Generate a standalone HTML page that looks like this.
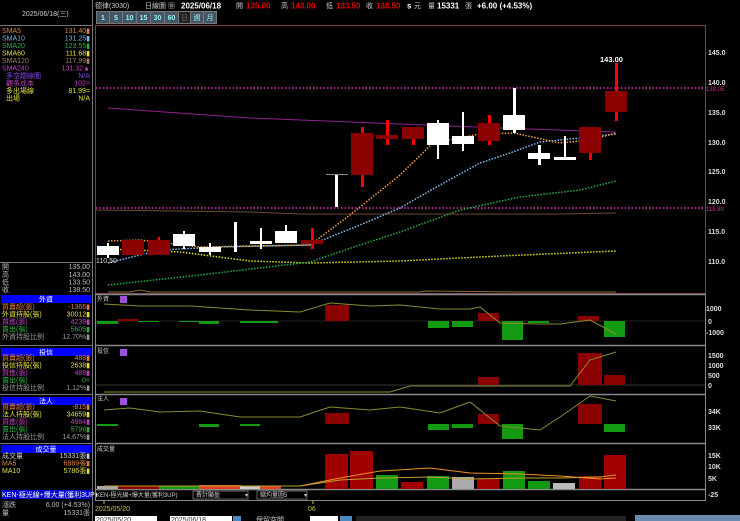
<!DOCTYPE html>
<html><head><meta charset="utf-8"><style>
html,body{margin:0;padding:0;background:#000;width:740px;height:521px;overflow:hidden}
svg{display:block}
text{font-family:"Liberation Sans","Noto Sans CJK TC",sans-serif}
.t{font-size:7px}
</style></head><body>
<svg width="740" height="521" viewBox="0 0 740 521">
<rect width="740" height="521" fill="#000"/>
<!-- left panel -->
<line x1="92.5" y1="0" x2="92.5" y2="521" stroke="#777" stroke-width="1"/>
<text x="22" y="16" class="t" fill="#ccc">2025/06/18(三)</text>
<line x1="0" y1="25.5" x2="92" y2="25.5" stroke="#777"/>
<g class="t" font-size="6.5">
<text x="2" y="33" fill="#e08040">SMA5</text><text x="90" y="33" fill="#e08040" text-anchor="end">131.40▮</text>
<text x="2" y="40.5" fill="#7ab8e0">SMA10</text><text x="90" y="40.5" fill="#7ab8e0" text-anchor="end">131.25▮</text>
<text x="2" y="48" fill="#30b040">SMA20</text><text x="90" y="48" fill="#30b040" text-anchor="end">123.55▮</text>
<text x="2" y="55.5" fill="#e0e040">SMA60</text><text x="90" y="55.5" fill="#e0e040" text-anchor="end">111.68▮</text>
<text x="2" y="63" fill="#a08060">SMA120</text><text x="90" y="63" fill="#a08060" text-anchor="end">117.99▮</text>
<text x="2" y="70.5" fill="#c040c0">SMA240</text><text x="90" y="70.5" fill="#c040c0" text-anchor="end">131.32▲</text>
<text x="6" y="78" fill="#8040e0">多空趨線圖</text><text x="90" y="78" fill="#8040e0" text-anchor="end">N/A</text>
<text x="6" y="85.5" fill="#c040c0">觀多成本</text><text x="90" y="85.5" fill="#c040c0" text-anchor="end">102=</text>
<text x="6" y="93" fill="#e0e040">多出場線</text><text x="90" y="93" fill="#e0e040" text-anchor="end">81.99=</text>
<text x="6" y="100.5" fill="#e0e040">出場</text><text x="90" y="100.5" fill="#e0e040" text-anchor="end">N/A</text>
</g>
<line x1="0" y1="262.5" x2="92" y2="262.5" stroke="#777"/>
<g class="t" font-size="6.5" fill="#bbb">
<text x="2" y="269">開</text><text x="90" y="269" text-anchor="end">135.00</text>
<text x="2" y="277">高</text><text x="90" y="277" text-anchor="end">143.00</text>
<text x="2" y="284.5">低</text><text x="90" y="284.5" text-anchor="end">133.50</text>
<text x="2" y="292">收</text><text x="90" y="292" text-anchor="end">138.50</text>
</g>
<!-- section headers -->
<g class="t" font-size="6.5">
<rect x="1" y="295" width="90" height="8" fill="#0000ff"/><text x="46" y="301.5" fill="#fff" text-anchor="middle">外資</text>
<text x="2" y="309" fill="#e08040">買賣超(張)</text><text x="90" y="309" fill="#e08040" text-anchor="end">-1366▮</text>
<text x="2" y="316.5" fill="#e0e040">外資持股(張)</text><text x="90" y="316.5" fill="#e0e040" text-anchor="end">30012▮</text>
<text x="2" y="324" fill="#c040c0">買進(張)</text><text x="90" y="324" fill="#c040c0" text-anchor="end">4239▮</text>
<text x="2" y="331.5" fill="#30b040">賣出(張)</text><text x="90" y="331.5" fill="#30b040" text-anchor="end">5605▮</text>
<text x="2" y="339" fill="#999">外資持股比例</text><text x="90" y="339" fill="#999" text-anchor="end">12.70%▮</text>
<line x1="0" y1="345.5" x2="92" y2="345.5" stroke="#777"/>
<rect x="1" y="348" width="90" height="8" fill="#0000ff"/><text x="46" y="354.5" fill="#fff" text-anchor="middle">投信</text>
<text x="2" y="360" fill="#e08040">買賣超(張)</text><text x="90" y="360" fill="#e08040" text-anchor="end">488▮</text>
<text x="2" y="367.5" fill="#e0e040">投信持股(張)</text><text x="90" y="367.5" fill="#e0e040" text-anchor="end">2638▮</text>
<text x="2" y="375" fill="#c040c0">買進(張)</text><text x="90" y="375" fill="#c040c0" text-anchor="end">488▮</text>
<text x="2" y="382.5" fill="#30b040">賣出(張)</text><text x="90" y="382.5" fill="#30b040" text-anchor="end">0=</text>
<text x="2" y="390" fill="#999">投信持股比例</text><text x="90" y="390" fill="#999" text-anchor="end">1.12%▮</text>
<line x1="0" y1="394.5" x2="92" y2="394.5" stroke="#777"/>
<rect x="1" y="397" width="90" height="8" fill="#0000ff"/><text x="46" y="403.5" fill="#fff" text-anchor="middle">法人</text>
<text x="2" y="409" fill="#e08040">買賣超(張)</text><text x="90" y="409" fill="#e08040" text-anchor="end">-815▮</text>
<text x="2" y="416.5" fill="#e0e040">法人持股(張)</text><text x="90" y="416.5" fill="#e0e040" text-anchor="end">34659▮</text>
<text x="2" y="424" fill="#c040c0">買進(張)</text><text x="90" y="424" fill="#c040c0" text-anchor="end">4984▮</text>
<text x="2" y="431.5" fill="#30b040">賣出(張)</text><text x="90" y="431.5" fill="#30b040" text-anchor="end">5798▮</text>
<text x="2" y="439" fill="#999">法人持股比例</text><text x="90" y="439" fill="#999" text-anchor="end">14.67%▮</text>
<line x1="0" y1="443.5" x2="92" y2="443.5" stroke="#777"/>
<rect x="1" y="445" width="90" height="8" fill="#0000ff"/><text x="46" y="451.5" fill="#fff" text-anchor="middle">成交量</text>
<text x="2" y="458" fill="#ccc">成交量</text><text x="90" y="458" fill="#ccc" text-anchor="end">15331張▮</text>
<text x="2" y="465.5" fill="#e08040">MA5</text><text x="90" y="465.5" fill="#e08040" text-anchor="end">6889張▮</text>
<text x="2" y="473" fill="#e0e040">MA10</text><text x="90" y="473" fill="#e0e040" text-anchor="end">5786張▮</text>
<rect x="1" y="490" width="90" height="9" fill="#0000cc"/><text x="2" y="497" fill="#fff">KEN-極光線+爆大量(獲利3UP)</text>
<text x="2" y="507" fill="#bbb">漲跌</text><text x="90" y="507" fill="#bbb" text-anchor="end">6.00 (+4.53%)</text>
<text x="2" y="515" fill="#bbb">量</text><text x="90" y="515" fill="#bbb" text-anchor="end">15331張</text>
</g>
<!-- top bar -->
<g font-size="8">
<text x="95" y="8" fill="#ccc" font-size="7">德律(3030)</text>
<text x="145" y="8" fill="#ccc" font-size="7">日線圖 ▦</text>
<text x="181" y="8.5" fill="#fff" font-weight="bold">2025/06/18</text>
<text x="236" y="8" fill="#ccc" font-size="7">開</text><text x="246" y="8.5" fill="#e00000" font-weight="bold">135.00</text>
<text x="281" y="8" fill="#ccc" font-size="7">高</text><text x="291" y="8.5" fill="#e00000" font-weight="bold">143.00</text>
<text x="326" y="8" fill="#ccc" font-size="7">低</text><text x="336" y="8.5" fill="#e00000" font-weight="bold">133.50</text>
<text x="366" y="8" fill="#ccc" font-size="7">收</text><text x="376" y="8.5" fill="#e00000" font-weight="bold">138.50</text>
<text x="407" y="8.5" fill="#fff" font-weight="bold">s</text><text x="414" y="8" fill="#ccc" font-size="7">元</text>
<text x="428" y="8" fill="#ccc" font-size="7">量</text><text x="437" y="8.5" fill="#fff" font-weight="bold">15331</text>
<text x="465" y="8" fill="#ccc" font-size="7">張</text><text x="477" y="8.5" fill="#fff" font-weight="bold">+6.00 (+4.53%)</text>
</g>
<g font-size="7" fill="#9ee" font-weight="bold">
<rect x="96" y="11" width="121" height="13" fill="#777"/>
<rect x="97" y="12" width="12" height="11" fill="#456"/><text x="103" y="20" text-anchor="middle">1</text>
<rect x="110" y="12" width="12" height="11" fill="#456"/><text x="116" y="20" text-anchor="middle">5</text>
<rect x="123" y="12" width="13" height="11" fill="#456"/><text x="129.5" y="20" text-anchor="middle">10</text>
<rect x="137" y="12" width="13" height="11" fill="#456"/><text x="143.5" y="20" text-anchor="middle">15</text>
<rect x="151" y="12" width="13" height="11" fill="#456"/><text x="157.5" y="20" text-anchor="middle">30</text>
<rect x="165" y="12" width="13" height="11" fill="#456"/><text x="171.5" y="20" text-anchor="middle">60</text>
<rect x="179" y="12" width="11" height="11" fill="#222"/><text x="184.5" y="20" text-anchor="middle" fill="#666" font-weight="normal">日</text>
<rect x="191" y="12" width="12" height="11" fill="#456"/><text x="197" y="20" text-anchor="middle" font-weight="normal">週</text>
<rect x="204" y="12" width="12" height="11" fill="#456"/><text x="210" y="20" text-anchor="middle" font-weight="normal">月</text>
</g>
<!-- panels frame -->
<rect x="95.5" y="25.5" width="610" height="268" fill="none" stroke="#7a3a50"/>
<line x1="95" y1="294.5" x2="706" y2="294.5" stroke="#888" stroke-width="1.5"/>
<line x1="95" y1="345.5" x2="706" y2="345.5" stroke="#888" stroke-width="1.5"/>
<line x1="95" y1="394.5" x2="706" y2="394.5" stroke="#888" stroke-width="1.5"/>
<line x1="95" y1="443.5" x2="706" y2="443.5" stroke="#888" stroke-width="1.5"/>
<line x1="95" y1="489.5" x2="706" y2="489.5" stroke="#888" stroke-width="1.5"/>
<line x1="95" y1="500.5" x2="706" y2="500.5" stroke="#888"/>
<line x1="95.5" y1="294" x2="95.5" y2="500" stroke="#888"/>
<line x1="705.5" y1="294" x2="705.5" y2="500" stroke="#888"/>
<!-- right axis labels -->
<g font-size="7" fill="#ddd" font-weight="bold">
<text x="708" y="55">145.0</text><text x="708" y="85">140.0</text><text x="708" y="115">135.0</text><text x="708" y="145">130.0</text>
<text x="708" y="174">125.0</text><text x="708" y="204">120.0</text><text x="708" y="234">115.0</text><text x="708" y="264">110.0</text>
<text x="706" y="311">1000</text><text x="708" y="324">0</text><text x="706" y="335">-1000</text>
<text x="708" y="358">1500</text><text x="708" y="368">1000</text><text x="708" y="378">500</text><text x="708" y="388">0</text>
<text x="708" y="414">34K</text><text x="708" y="430">33K</text>
<text x="708" y="458">15K</text><text x="708" y="469">10K</text><text x="708" y="481">5K</text><text x="708" y="497">-25</text>
</g>
<text x="706" y="91" font-size="6" fill="#d03090">139.05</text>
<text x="706" y="211" font-size="6" fill="#d03090">118.80</text>
<!-- dotted magenta lines -->
<line x1="96" y1="88" x2="706" y2="88" stroke="#e030b0" stroke-width="1.5" stroke-dasharray="1.5 2"/>
<line x1="96" y1="208" x2="706" y2="208" stroke="#e030b0" stroke-width="1.5" stroke-dasharray="1.5 2"/>
<!-- MA lines -->
<polyline points="108,108 250,118 400,124 500,128 616,132" fill="none" stroke="#902090" stroke-width="1"/>
<polyline points="96,210 250,212 300,214 450,214 560,214 616,213" fill="none" stroke="#6a4a30" stroke-width="1"/>
<polyline points="108,249 180,252 250,261 310,263 400,261 500,256 616,251" fill="none" stroke="#e0e020" stroke-width="1.5" stroke-dasharray="1.5 1.5"/>
<polyline points="108,285 200,275 310,262 360,245 400,232 460,210 520,197 580,190 616,181" fill="none" stroke="#20b040" stroke-width="1.5" stroke-dasharray="1.5 1.5"/>
<polyline points="108,263 160,250 220,247 310,245 360,225 400,208 440,185 480,163 510,153 540,142 580,138 616,134" fill="none" stroke="#80c0f0" stroke-width="1.5" stroke-dasharray="1.5 1.5"/>
<polyline points="108,241 140,240 200,247 250,246 310,245 350,215 400,175 433,143 480,134 514,133 560,143 590,140 616,133" fill="none" stroke="#f0a040" stroke-width="1.5" stroke-dasharray="1.5 1.5"/>
<!-- candles -->
<g>
<!-- white candles -->
<g fill="#fff">
<rect x="107" y="243" width="2" height="15"/><rect x="97" y="246" width="22" height="9"/>
<rect x="183" y="231" width="2" height="18"/><rect x="173" y="234" width="22" height="12"/>
<rect x="209" y="243" width="2" height="12"/><rect x="199" y="247" width="22" height="5"/>
<rect x="234" y="222" width="3" height="30"/>
<rect x="260" y="228" width="2" height="21"/><rect x="250" y="241" width="22" height="3"/>
<rect x="285" y="225" width="2" height="18"/><rect x="275" y="231" width="22" height="12"/>
<rect x="335" y="175" width="3" height="32"/><rect x="326" y="174" width="22" height="1" fill="#888"/>
<rect x="437" y="120" width="2" height="39"/><rect x="427" y="123" width="22" height="22"/>
<rect x="462" y="112" width="2" height="39"/><rect x="452" y="136" width="22" height="8"/>
<rect x="513" y="88" width="3" height="45"/><rect x="503" y="115" width="22" height="15"/>
<rect x="538" y="145" width="3" height="20"/><rect x="528" y="153" width="22" height="6"/>
<rect x="564" y="136" width="2" height="24"/><rect x="554" y="157" width="22" height="3"/>
</g>
<!-- red candles -->
<g>
<rect x="122" y="240" width="22" height="15" fill="#8b0000"/>
<rect x="158" y="237" width="2" height="18" fill="#f00"/><rect x="148" y="240" width="22" height="15" fill="#8b0000"/>
<rect x="311" y="228" width="3" height="21" fill="#f00"/><rect x="301" y="240" width="22" height="4" fill="#8b0000"/>
<rect x="361" y="127" width="3" height="60" fill="#f00"/><rect x="351" y="133" width="22" height="42" fill="#8b0000"/>
<rect x="386" y="120" width="3" height="25" fill="#f00"/><rect x="376" y="135" width="22" height="4" fill="#8b0000"/>
<rect x="412" y="127" width="3" height="18" fill="#f00"/><rect x="402" y="127" width="22" height="12" fill="#8b0000"/>
<rect x="488" y="115" width="3" height="30" fill="#f00"/><rect x="478" y="123" width="22" height="18" fill="#8b0000"/>
<rect x="589" y="127" width="3" height="33" fill="#f00"/><rect x="579" y="127" width="22" height="26" fill="#8b0000"/>
<rect x="615" y="63" width="3" height="58" fill="#f00"/><rect x="605" y="91" width="22" height="21" fill="#8b0000"/>
</g>
</g>
<text x="600" y="62" font-size="7.5" fill="#fff" font-weight="bold">143.00</text>
<text x="96" y="263" font-size="7" fill="#ddd">110.50</text>
<!-- small bottom line of main -->
<polyline points="108,292 130,292 140,290 150,292 420,292 425,291 520,292 616,292" fill="none" stroke="#8a6a30"/>
<!-- 外資 panel -->
<text x="97" y="301" font-size="6" fill="#ccc">外資</text><rect x="120" y="296" width="7" height="7" fill="#a050e0"/>
<line x1="96" y1="321" x2="705" y2="321" stroke="#222"/>
<g fill="#139a13">
<rect x="97" y="321" width="21" height="3"/><rect x="138" y="321" width="21" height="1"/><rect x="179" y="321" width="21" height="1"/>
<rect x="199" y="321" width="20" height="3"/><rect x="240" y="321" width="20" height="2"/><rect x="258" y="321" width="20" height="2"/>
<rect x="428" y="321" width="21" height="7"/><rect x="452" y="321" width="21" height="6"/><rect x="502" y="321" width="21" height="19"/>
<rect x="528" y="321" width="21" height="2"/><rect x="604" y="321" width="21" height="16"/>
</g>
<g fill="#8b0000">
<rect x="118" y="319" width="20" height="2"/><rect x="325" y="305" width="24" height="16"/><rect x="478" y="313" width="21" height="8"/><rect x="578" y="316" width="21" height="5"/>
</g>
<polyline points="104,304 140,306 190,306 250,310 300,312 330,303 370,306 400,305 440,309 470,309 480,307 500,323 540,324 560,324 590,320 616,334" fill="none" stroke="#8a8a30"/>
<!-- 投信 panel -->
<text x="97" y="353" font-size="6" fill="#ccc">投信</text><rect x="120" y="349" width="7" height="7" fill="#a050e0"/>
<line x1="96" y1="385" x2="705" y2="385" stroke="#333"/>
<rect x="478" y="377" width="21" height="8" fill="#8b0000"/>
<rect x="578" y="353" width="24" height="32" fill="#8b0000"/>
<rect x="604" y="375" width="21" height="10" fill="#8b0000"/>
<polyline points="104,392 390,392 410,386 570,386 590,360 616,352" fill="none" stroke="#8a8a30"/>
<!-- 法人 panel -->
<text x="97" y="401" font-size="6" fill="#ccc">法人</text><rect x="120" y="398" width="7" height="7" fill="#a050e0"/>
<g fill="#139a13">
<rect x="97" y="424" width="21" height="2"/><rect x="199" y="424" width="20" height="3"/><rect x="240" y="424" width="20" height="2"/>
<rect x="428" y="424" width="21" height="6"/><rect x="452" y="424" width="21" height="4"/><rect x="502" y="424" width="21" height="15"/>
<rect x="604" y="424" width="21" height="8"/>
</g>
<g fill="#8b0000">
<rect x="325" y="413" width="24" height="11"/><rect x="478" y="414" width="21" height="10"/><rect x="578" y="404" width="24" height="20"/>
</g>
<polyline points="104,410 130,408 160,412 200,411 240,417 300,417 330,407 370,410 400,407 440,413 470,402 500,426 540,430 560,417 590,396 616,401" fill="none" stroke="#8a8a30"/>
<!-- 成交量 panel -->
<text x="97" y="451" font-size="6" fill="#ccc">成交量</text>
<g>
<rect x="97" y="486" width="21" height="3" fill="#aaa"/><rect x="118" y="486" width="20" height="3" fill="#8b0000"/><rect x="138" y="486" width="21" height="3" fill="#8b0000"/>
<rect x="159" y="486" width="21" height="3" fill="#139a13"/><rect x="180" y="486" width="21" height="3" fill="#139a13"/><rect x="199" y="485" width="21" height="4" fill="#e04020"/>
<rect x="220" y="485" width="21" height="4" fill="#e04020"/><rect x="240" y="486" width="21" height="3" fill="#ccc"/><rect x="260" y="486" width="21" height="3" fill="#e04020"/>
<rect x="325" y="454" width="23" height="35" fill="#a00000"/><rect x="350" y="451" width="23" height="38" fill="#a00000"/>
<rect x="376" y="475" width="22" height="14" fill="#139a13"/><rect x="401" y="482" width="22" height="7" fill="#a00000"/>
<rect x="427" y="476" width="22" height="13" fill="#139a13"/><rect x="452" y="477" width="22" height="12" fill="#aaa"/>
<rect x="477" y="479" width="22" height="10" fill="#a00000"/><rect x="503" y="471" width="22" height="18" fill="#139a13"/>
<rect x="528" y="481" width="22" height="8" fill="#139a13"/><rect x="553" y="483" width="22" height="6" fill="#bbb"/>
<rect x="579" y="476" width="22" height="13" fill="#a00000"/><rect x="604" y="455" width="22" height="34" fill="#a00000"/>
</g>
<polyline points="104,486 300,486 340,478 380,471 430,468 470,473 520,474 560,476 600,479 616,478" fill="none" stroke="#f09020"/>
<polyline points="104,486 300,486 340,480 380,478 430,477 470,479 520,478 560,478 600,477 616,475" fill="none" stroke="#c0a030"/>
<!-- indicator bar -->
<g font-size="6" fill="#ccc">
<text x="96" y="497">KEN-極光線+爆大量(獲利3UP)</text>
<rect x="193" y="491" width="55" height="8" fill="#000" stroke="#666"/><text x="196" y="497">費計顯盈</text><text x="245" y="497">▾</text>
<rect x="257" y="491" width="50" height="8" fill="#000" stroke="#666"/><text x="260" y="497">縮均量圖5</text><text x="304" y="497">▾</text>
</g>
<g font-size="7" fill="#c0c040">
<line x1="104" y1="501" x2="104" y2="504" stroke="#c0c040"/><text x="95" y="511">2025/05/20</text>
<line x1="313" y1="501" x2="313" y2="504" stroke="#c0c040"/><text x="308" y="511">06</text>
</g>
<g font-size="7">
<rect x="95" y="516" width="62" height="6" fill="#fff"/><text x="96" y="522" fill="#333">2025/05/20</text>
<rect x="170" y="516" width="62" height="6" fill="#fff"/><text x="171" y="522" fill="#333">2025/06/18</text>
<rect x="233" y="516" width="8" height="6" fill="#4a8ac0"/>
<text x="256" y="522" fill="#ccc">保留空間</text>
<rect x="310" y="516" width="28" height="6" fill="#fff"/>
<rect x="340" y="516" width="12" height="6" fill="#4a8ac0"/>
<rect x="356" y="516" width="270" height="6" fill="#222"/>
<rect x="635" y="515" width="105" height="6" fill="#6a8ab0"/>
</g>
</svg>
</body></html>
